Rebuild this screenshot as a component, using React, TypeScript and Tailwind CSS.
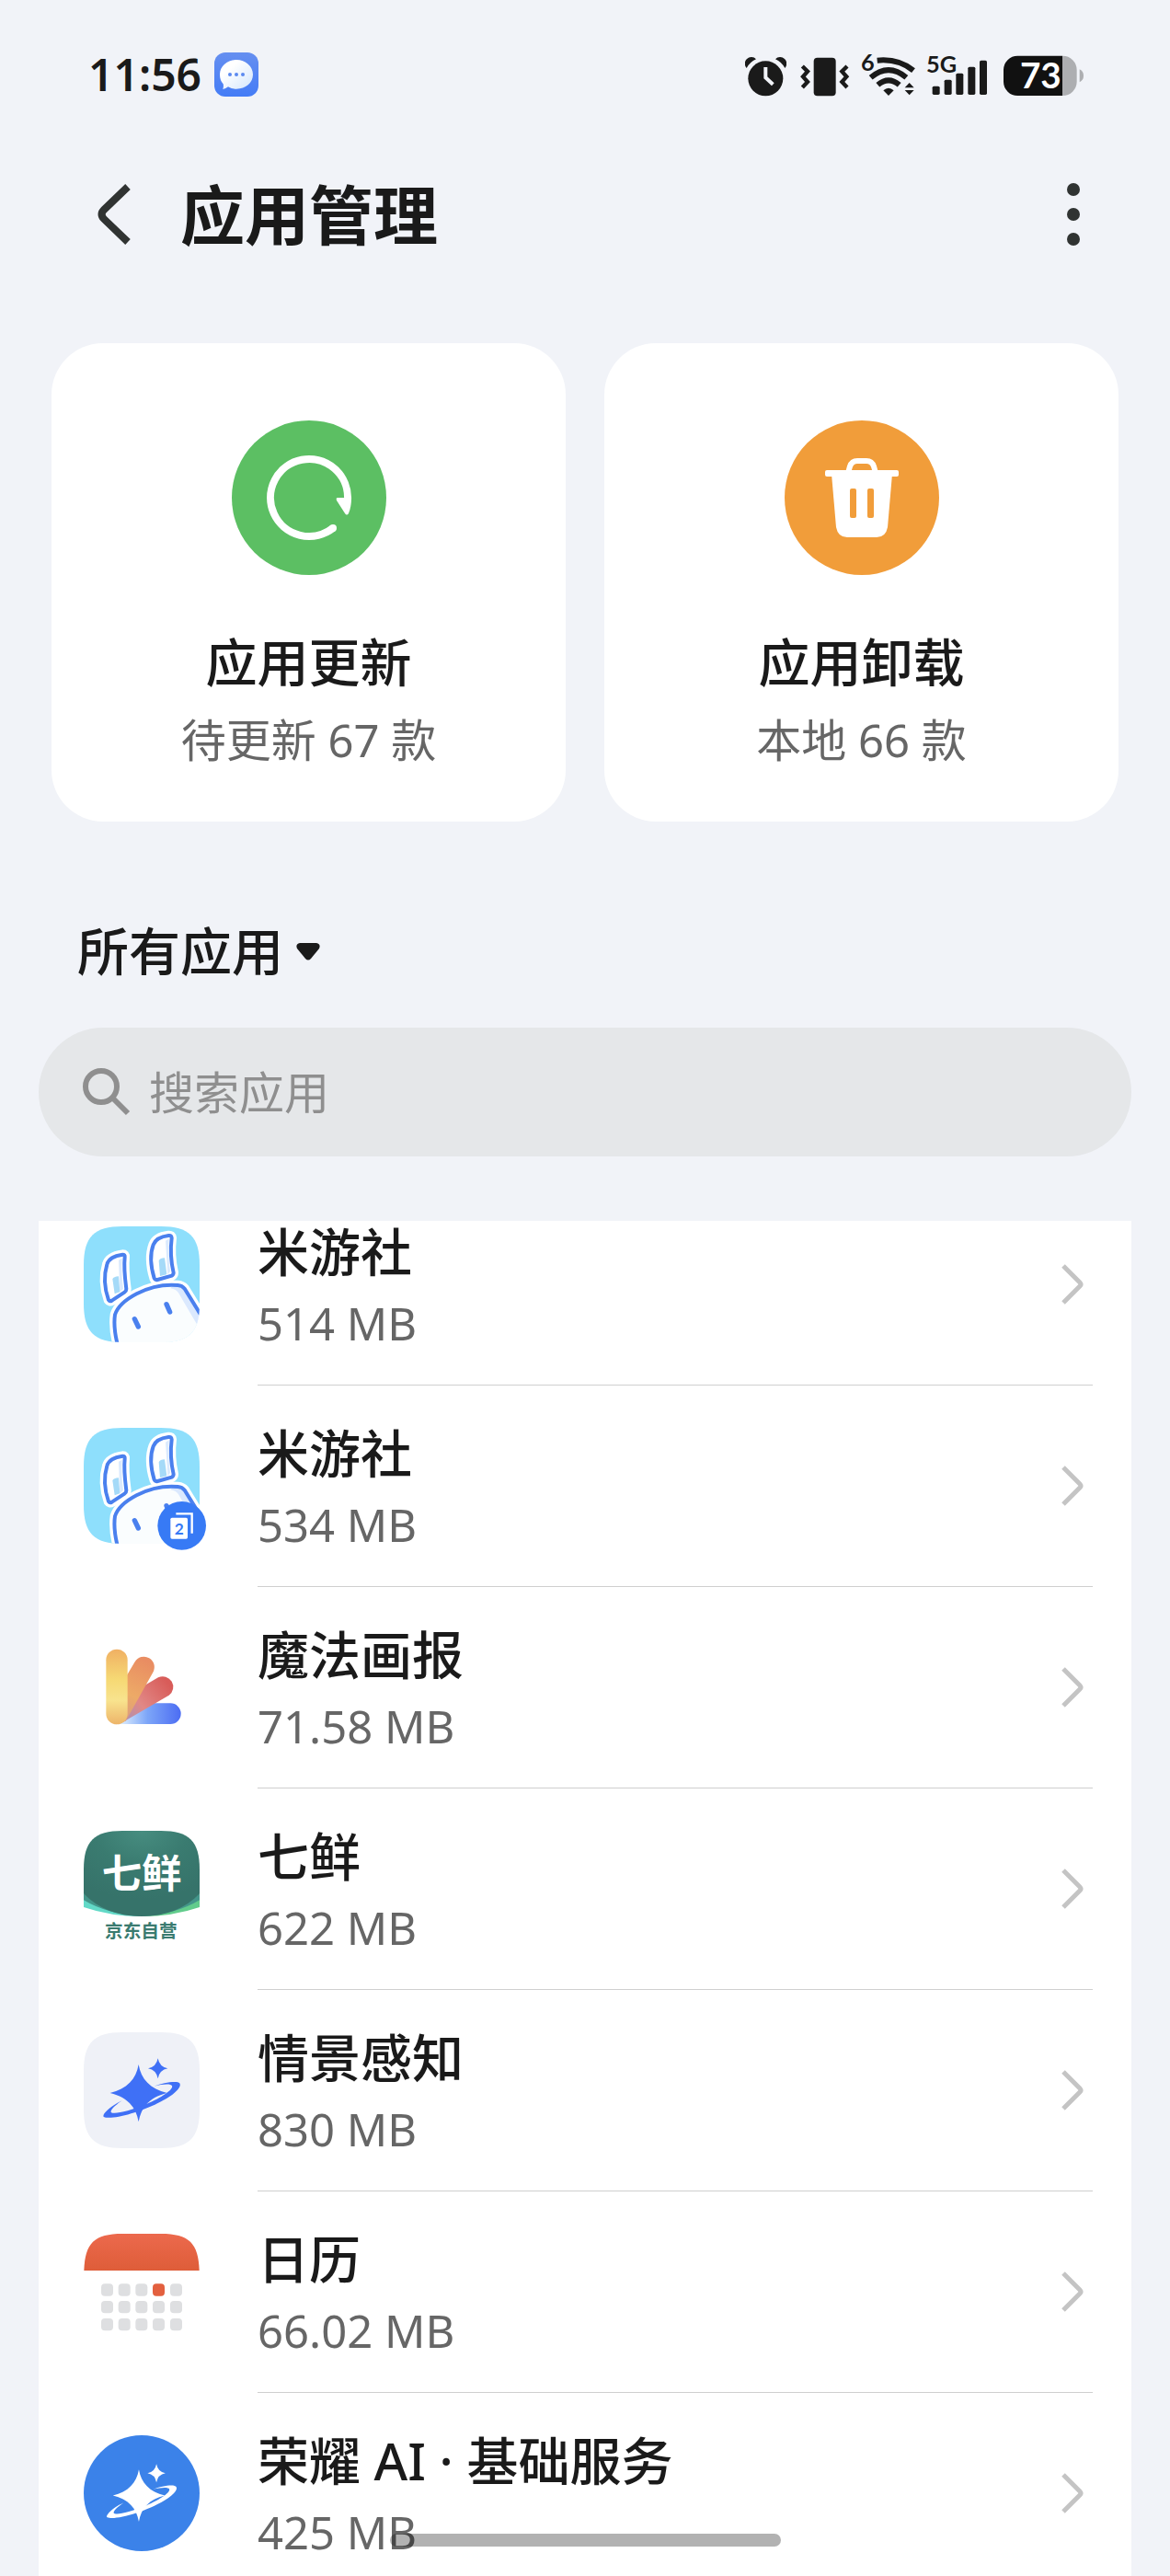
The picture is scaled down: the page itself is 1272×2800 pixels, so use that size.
import type { ReactNode } from "react";

const SQUIRCLE =
  "M0 126C0 34 34 0 126 0H252C344 0 378 34 378 126V252C378 344 344 378 252 378H126C34 378 0 344 0 252Z";

function StatusIcons() {
  return (
    <div className="flex items-center text-[#1a1a1a]">
      <svg className="h-12 w-[45px]" viewBox="60 45 135 144" fill="currentColor">
        <circle cx="127" cy="130" r="57" />
        <path d="M65 96A20 20 0 0 1 96 67Q76 76 65 96ZM190 96A20 20 0 0 0 159 67Q179 76 190 96Z" />
        <path d="M127 93V127L151 149" fill="none" stroke="#f1f3f8" strokeWidth="12" />
      </svg>
      <svg className="ml-[14px] h-12 w-[55px]" viewBox="237 45 165 144" fill="currentColor">
        <rect x="284" y="62" width="72" height="125" rx="12" />
        <path
          d="M247 90L264 107L249 124L264 141L247 159M393 90L376 107L391 124L376 141L393 159"
          fill="none"
          stroke="currentColor"
          strokeWidth="13"
        />
      </svg>
      <svg className="ml-3 h-12 w-[60px] overflow-visible" viewBox="438 45 180 144" fill="currentColor">
        <text x="438" y="104" fontSize="76" fontWeight="700" fontFamily="Lato, sans-serif">6</text>
        <g fill="none" stroke="currentColor" strokeWidth="18">
          <path d="M491 71Q560 64 609 104" />
          <path d="M470 127Q528 78 586 127" />
          <path d="M493 151Q528 121 563 151" />
        </g>
        <path d="M528 186L511 169Q528 153 545 169ZM596 144L611 160H581ZM596 184L611 168H581Z" />
      </svg>
      <svg className="ml-[11px] h-12 w-[67px] overflow-visible" viewBox="651 45 201 144" fill="currentColor">
        <text x="651" y="110" fontSize="76" fontWeight="700" fontFamily="Lato, sans-serif">5G</text>
        <rect x="671" y="155" width="24" height="28" rx="5" />
        <rect x="710" y="134" width="24" height="49" rx="5" />
        <rect x="748" y="113" width="24" height="70" rx="5" />
        <rect x="787" y="92" width="24" height="91" rx="5" />
        <rect x="825" y="71" width="24" height="112" rx="5" />
      </svg>
      <svg className="ml-4 h-12 w-[89px]" viewBox="900 45 267 144">
        <path d="M1095 56H1096A46 46 0 0 1 1142 102V141A46 46 0 0 1 1096 186H1095Z" fill="#adaeb1" />
        <path d="M1151 100Q1164 106 1164 121T1151 142Z" fill="#adaeb1" />
        <path d="M949 56H1095V186H949A46 46 0 0 1 903 141V102A46 46 0 0 1 949 56Z" fill="#111" />
        <text
          x="1024"
          y="163"
          textAnchor="middle"
          fontSize="116"
          fontWeight="700"
          fontFamily="Lato, sans-serif"
          fill="#fff"
        >
          73
        </text>
      </svg>
    </div>
  );
}

function MessageIcon() {
  return (
    <svg className="size-12" viewBox="0 0 144 144">
      <defs>
        <linearGradient id="msg-bg" x2="0" y2="1">
          <stop stopColor="#668ff0" />
          <stop offset="1" stopColor="#447cf6" />
        </linearGradient>
        <linearGradient id="msg-bubble" x2="1" y2="1">
          <stop offset="0.3" stopColor="#fff" />
          <stop offset="1" stopColor="#d3e6fc" />
        </linearGradient>
      </defs>
      <rect width="144" height="144" rx="36" fill="url(#msg-bg)" />
      <path
        d="M72 24C102 24 126 45 126 72S102 119 72 119Q56 119 45 112Q37 119 28 120Q31 110 29 103Q18 91 18 72C18 45 42 24 72 24Z"
        fill="url(#msg-bubble)"
      />
      <g fill="#5b8af0">
        <circle cx="51" cy="72" r="6" />
        <circle cx="72" cy="72" r="6" />
        <circle cx="93" cy="72" r="6" />
      </g>
    </svg>
  );
}

function UpdateIcon() {
  return (
    <svg className="size-[168px]" viewBox="0 0 168 168">
      <circle cx="84" cy="84" r="84" fill="#5cbf63" />
      <path d="M126 86A42 42 0 1 0 110 117" fill="none" stroke="#fff" strokeWidth="8" />
      <circle cx="110" cy="117" r="4" fill="#fff" />
      <path d="M115 84H130Q130 94 127 101Q125 104 123 101L114 87Q113 84 115 84Z" fill="#fff" />
    </svg>
  );
}

function TrashIcon() {
  return (
    <svg className="size-[168px]" viewBox="0 0 168 168">
      <circle cx="84" cy="84" r="84" fill="#f19d3a" />
      <path d="M69 57L71 50Q73 44 79 44H89Q95 44 97 50L99 57" fill="none" stroke="#fff" strokeWidth="6" />
      <rect x="44" y="54" width="80" height="7" rx="2" fill="#fff" />
      <path d="M51 58H117L112 116Q110 127 100 127H68Q58 127 56 116Z" fill="#fff" />
      <rect x="71" y="74" width="7" height="32" rx="2" fill="#f19d3a" />
      <rect x="90" y="74" width="7" height="32" rx="2" fill="#f19d3a" />
    </svg>
  );
}

function BunnyIcon({ cloned = false }: { cloned?: boolean }) {
  const ears = [
    "M280 160Q288 160 287 168C283 205 288 242 292 272Q292 279 286 283L245 310Q238 314 234 308C219 265 219 225 229 192Q236 166 280 160Z",
    "M430 98Q439 97 440 106C435 145 438 185 446 219Q446 226 440 229L394 242Q386 244 383 237C371 197 370 155 380 128Q389 103 430 98Z",
  ];
  const head = "M265 460C257 430 250 390 255 356C270 310 360 252 460 260Q474 261 482 271L540 365V460Z";
  const clip = cloned ? "bunny-clip-2" : "bunny-clip-1";
  return (
    <svg className="size-[126px] overflow-visible" viewBox="153 68 378 378">
      <clipPath id={clip}>
        <path d={SQUIRCLE} transform="translate(153 68)" />
      </clipPath>
      <g clipPath={`url(#${clip})`}>
        <rect x="153" y="68" width="378" height="378" fill="#8edffc" />
        <g fill="#fff" stroke="#fff" strokeWidth="32">
          <path d={ears[0]} />
          <path d={ears[1]} />
          <path d={head} />
        </g>
        <path d={head} fill="#fafdfe" />
        <path d="M440 264L462 262L475 270L540 370V410L520 384L462 285Q455 273 436 270Z" fill="#dbe9fe" />
        <path d={head} fill="none" stroke="#4a80ee" strokeWidth="12" />
        <path d="M267 178L278 172Q275 225 282 272L271 282ZM420 115L431 108Q427 165 435 215L427 225Z" fill="#dbeafd" />
        <path d="M247 240Q250 232 267 231L271 282L254 288ZM398 180Q402 171 417 171L424 225L402 230Z" fill="#a5daf8" />
        <g fill="none" stroke="#4a80ee" strokeWidth="12">
          <path d={ears[0]} />
          <path d={ears[1]} />
        </g>
        <path
          d="M319 370L331 395M423 322L434 347"
          stroke="#4a80ee"
          strokeWidth="16"
          strokeLinecap="round"
        />
      </g>
      {cloned && (
        <g>
          <circle cx="473" cy="387" r="79" fill="#377af5" />
          <path d="M454 348H506V412" fill="none" stroke="#fff" strokeWidth="7" />
          <rect x="436" y="361" width="56" height="69" rx="5" fill="#fff" />
          <text
            x="464"
            y="415"
            textAnchor="middle"
            fontSize="52"
            fontWeight="700"
            fontFamily="Lato, sans-serif"
            fill="#377af5"
          >
            2
          </text>
        </g>
      )}
    </svg>
  );
}

function MagazineIcon() {
  return (
    <svg className="size-[126px]" viewBox="33 3 378 378">
      <defs>
        <linearGradient id="mag-yellow" x2="0" y2="1">
          <stop stopColor="#f0b063" />
          <stop offset="0.4" stopColor="#f6d974" />
          <stop offset="0.68" stopColor="#f8e38e" />
          <stop offset="1" stopColor="#edb469" />
        </linearGradient>
        <linearGradient id="mag-orange" gradientUnits="userSpaceOnUse" x1="235" y1="105" x2="150" y2="290">
          <stop stopColor="#e98d62" />
          <stop offset="0.6" stopColor="#edaa67" />
          <stop offset="1" stopColor="#d99c80" />
        </linearGradient>
        <linearGradient id="mag-red" gradientUnits="userSpaceOnUse" x1="310" y1="180" x2="165" y2="300">
          <stop stopColor="#d85c59" />
          <stop offset="0.6" stopColor="#e18886" />
          <stop offset="0.9" stopColor="#b98fa8" />
        </linearGradient>
        <linearGradient id="mag-blue" gradientUnits="userSpaceOnUse" x1="150" y1="0" x2="350" y2="0">
          <stop stopColor="#e0f0fd" />
          <stop offset="0.45" stopColor="#7da6f8" />
          <stop offset="1" stopColor="#4c6df3" />
        </linearGradient>
      </defs>
      <path d="M140 244H316A34 34 0 0 1 316 312H140Z" fill="url(#mag-blue)" />
      <path d="M124 249L276 160A34 34 0 0 1 311 218L155 309Z" fill="url(#mag-red)" />
      <path d="M110 260L200 109A34 34 0 0 1 259 143L170 302L140 313Z" fill="url(#mag-orange)" />
      <rect x="106" y="68" width="70" height="245" rx="35" fill="url(#mag-yellow)" />
    </svg>
  );
}

function FreshIcon() {
  return (
    <svg className="size-[126px]" viewBox="33 30 378 378">
      <defs>
        <radialGradient id="fresh-bg" cx="0.5" cy="0" r="0.8">
          <stop stopColor="#478d80" />
          <stop offset="0.5" stopColor="#3a7b70" />
          <stop offset="1" stopColor="#36736a" />
        </radialGradient>
      </defs>
      <path d="M33 232V279Q120 309 222 309Z" fill="#62d9c7" />
      <path d="M411 232V279Q324 309 222 309Z" fill="#62cc8c" />
      <path d="M33 235V256Q110 302 222 309ZM411 235V256Q334 302 222 309Z" fill="#43968a" />
      <path
        d="M33 156C33 64 67 30 159 30H285C377 30 411 64 411 156V235Q340 309 222 309T33 235Z"
        fill="url(#fresh-bg)"
      />
      <text
        x="222"
        y="216"
        textAnchor="middle"
        fontSize="130"
        fontWeight="700"
        fontFamily="'Noto Sans CJK SC', sans-serif"
        fill="#fff"
      >
        七鲜
      </text>
      <text
        x="220"
        y="379"
        textAnchor="middle"
        fontSize="59"
        fontWeight="700"
        fontFamily="'Noto Sans CJK SC', sans-serif"
        fill="#3a7b70"
      >
        京东自营
      </text>
    </svg>
  );
}

function StarOrbit() {
  return (
    <>
      <path d="M212 132C220 180 250 212 305 225C250 238 220 270 212 319C204 270 174 238 119 225C174 212 204 180 212 132Z" />
      <path d="M275 112Q280 140 307 145Q280 150 275 178Q270 150 243 145Q270 140 275 112Z" />
      <path d="M158 250C115 270 90 298 99 303C125 315 235 284 303 243C345 217 357 195 340 190C325 186 290 192 262 203C290 196 318 194 321 202C326 213 292 238 236 262C180 285 128 297 122 287C120 280 135 265 158 250Z" />
    </>
  );
}

function SceneIcon() {
  return (
    <svg className="size-[126px]" viewBox="33 27 378 378">
      <path d={SQUIRCLE} transform="translate(33 27)" fill="#eff1f7" />
      <g fill="#3f70f6">
        <StarOrbit />
      </g>
    </svg>
  );
}

function HonorAiIcon() {
  return (
    <svg className="size-[126px]" viewBox="33 27 378 378">
      <circle cx="222" cy="216" r="189" fill="#3b82e9" />
      <g fill="#fff" transform="translate(20 19) scale(0.91)">
        <StarOrbit />
      </g>
    </svg>
  );
}

function CalendarIcon() {
  const columns = [90, 146, 202, 258, 315];
  const rows = [187, 243, 300];
  return (
    <svg className="size-[126px]" viewBox="33 24 378 378">
      <defs>
        <linearGradient id="cal-top" x2="0" y2="1">
          <stop stopColor="#ec694d" />
          <stop offset="1" stopColor="#de5d39" />
        </linearGradient>
      </defs>
      <path d="M34 144C37 55 67 24 159 24H285C377 24 407 55 410 144Z" fill="url(#cal-top)" />
      {rows.map((y, r) =>
        columns.map((x, c) => (
          <rect
            key={`${r}-${c}`}
            x={x}
            y={y}
            width="39"
            height="40"
            rx="12"
            fill={r === 0 && c === 3 ? "#e3603f" : "#dedfe1"}
          />
        )),
      )}
    </svg>
  );
}

interface AppEntry {
  id: string;
  name: string;
  size: string;
  icon: ReactNode;
}

const apps: AppEntry[] = [
  { id: "miyoushe", name: "米游社", size: "514 MB", icon: <BunnyIcon /> },
  { id: "miyoushe-clone", name: "米游社", size: "534 MB", icon: <BunnyIcon cloned /> },
  { id: "magazine", name: "魔法画报", size: "71.58 MB", icon: <MagazineIcon /> },
  { id: "fresh", name: "七鲜", size: "622 MB", icon: <FreshIcon /> },
  { id: "scene", name: "情景感知", size: "830 MB", icon: <SceneIcon /> },
  { id: "calendar", name: "日历", size: "66.02 MB", icon: <CalendarIcon /> },
  { id: "honor-ai", name: "荣耀 AI · 基础服务", size: "425 MB", icon: <HonorAiIcon /> },
];

function AppRow({ app }: { app: AppEntry }) {
  return (
    <li>
      <a href={`#${app.id}`} className="flex items-center gap-[63px] pr-[42px] pl-[49px]">
        <span className="shrink-0 pb-0.5">{app.icon}</span>
        <span className="flex flex-1 items-center justify-between border-b border-[#cfcfcf] pr-2">
          <span className="pt-[34px] pb-7">
            <span className="block text-[56px] leading-[78px] font-medium">{app.name}</span>
            <span className="block text-[49px] leading-[78px] text-[#666]">{app.size}</span>
          </span>
          <svg className="h-[46px] w-7" viewBox="0 0 28 46" fill="none" stroke="#c4c4c4" strokeWidth="5">
            <path d="M4 3L22 21Q24 23 22 25L4 43" />
          </svg>
        </span>
      </a>
    </li>
  );
}

interface ActionCardProps {
  icon: ReactNode;
  title: string;
  detail: string;
}

function ActionCard({ icon, title, detail }: ActionCardProps) {
  return (
    <button type="button" className="flex flex-1 flex-col items-center rounded-[56px] bg-white pt-[84px] pb-[46px]">
      {icon}
      <span className="mt-[51px] text-[56px] leading-[86px] font-medium">{title}</span>
      <span className="text-[49px] leading-[85px] text-[#666]">{detail}</span>
    </button>
  );
}

export default function App() {
  return (
    <div className="relative flex h-screen flex-col overflow-hidden bg-[#f1f3f8] font-['Noto_Sans','Noto_Sans_CJK_SC',sans-serif] text-[#1a1a1a]">
      <div className="flex items-center justify-between pt-[55px] pr-[93px] pl-24">
        <div className="flex items-center gap-[14px]">
          <span className="text-5xl leading-[52px] font-semibold">11:56</span>
          <MessageIcon />
        </div>
        <StatusIcons />
      </div>

      <header className="flex items-center pt-[74px] pr-[93px] pl-[104px]">
        <button type="button" aria-label="返回">
          <svg className="h-[68px] w-10" viewBox="0 0 40 68" fill="none" stroke="#303332" strokeWidth="8">
            <path d="M35 4L9 29Q4 34 9 39L35 64" />
          </svg>
        </button>
        <h1 className="ml-[52px] flex-1 pt-0.5 text-[70px] leading-[102px] font-bold">应用管理</h1>
        <button type="button" aria-label="更多">
          <svg className="h-[68px] w-6" viewBox="0 0 24 68" fill="#303332">
            <circle cx="12" cy="7" r="7" />
            <circle cx="12" cy="34" r="7" />
            <circle cx="12" cy="61" r="7" />
          </svg>
        </button>
      </header>

      <div className="mt-[88px] flex gap-[42px] px-14">
        <ActionCard icon={<UpdateIcon />} title="应用更新" detail="待更新 67 款" />
        <ActionCard icon={<TrashIcon />} title="应用卸载" detail="本地 66 款" />
      </div>

      <div className="mt-[98px] flex items-center gap-[14px] pl-[84px]">
        <select
          aria-label="应用筛选"
          className="h-[84px] appearance-none bg-transparent text-[56px] leading-[84px] font-medium"
        >
          <option>所有应用</option>
        </select>
        <svg className="mt-1 h-5 w-[26px]" viewBox="0 0 26 20" fill="currentColor">
          <path d="M4 0H22Q27 1 25 6L16 17Q13 20 10 17L1 6Q-1 1 4 0Z" />
        </svg>
      </div>

      <label className="mx-[42px] mt-[42px] flex h-[140px] shrink-0 items-center gap-5 rounded-full bg-[#e5e7e9] pl-12">
        <svg className="size-[52px]" viewBox="0 0 52 52" fill="none" stroke="#8f8f8f" strokeWidth="6">
          <circle cx="20" cy="20" r="17" />
          <path d="M32 32L49 49" />
        </svg>
        <input
          type="search"
          aria-label="搜索应用"
          placeholder="搜索应用"
          className="h-20 min-w-0 flex-1 bg-transparent text-[49px] outline-none placeholder:text-[#8f8f8f]"
        />
      </label>

      <main className="mx-[42px] mt-[70px] min-h-0 flex-1 overflow-hidden bg-white">
        {/* list is scrolled slightly past its first row */}
        <ul className="-mt-10">
          {apps.map((app) => (
            <AppRow key={app.id} app={app} />
          ))}
        </ul>
      </main>

      <div className="absolute inset-x-0 bottom-8 mx-auto h-[14px] w-[425px] rounded-full bg-black/30" />
    </div>
  );
}
